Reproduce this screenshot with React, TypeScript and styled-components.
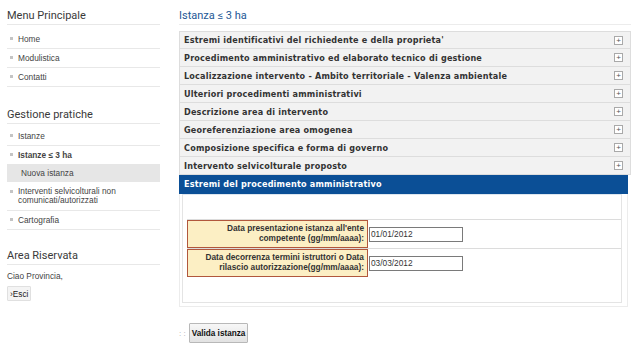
import styled, { createGlobalStyle } from 'styled-components';

const GlobalStyle = createGlobalStyle`
  html, body {
    margin: 0;
    padding: 0;
    background: #ffffff;
  }
  body {
    font-family: "Liberation Sans", Arial, sans-serif;
    color: #333333;
  }
`;

const Page = styled.div`
  display: flex;
  align-items: flex-start;
  gap: 19px;
  padding: 0 5px 0 7px;
`;

const Sidebar = styled.aside`
  width: 153px;
  flex-shrink: 0;
`;

const SideHeading = styled.h2<{ $top: number }>`
  margin: ${(p) => p.$top}px 0 0;
  padding: 9px 0 1px;
  font-family: Roboto, "Liberation Sans", sans-serif;
  font-weight: 400;
  font-size: 11px;
  line-height: 14px;
  color: #3a3a3a;
  border-bottom: 1px solid #e8e8e8;
`;

const MenuList = styled.ul<{ $top: number }>`
  list-style: none;
  margin: ${(p) => p.$top}px 0 0;
  padding: 0;
`;

const MenuItem = styled.li<{ $bold?: boolean; $noLine?: boolean }>`
  display: flex;
  align-items: center;
  gap: 5px;
  min-height: 18px;
  padding: 0 0 0 3px;
  font-size: 8.3px;
  line-height: 9px;
  color: #444;
  font-weight: ${(p) => (p.$bold ? 700 : 400)};
  border-bottom: ${(p) => (p.$noLine ? 'none' : '1px solid #e8e8e8')};

  &::before {
    content: '';
    width: 3px;
    height: 3px;
    background: #c4c4c4;
    flex-shrink: 0;
    align-self: flex-start;
    margin-top: 7px;
  }
`;

const MultiItem = styled(MenuItem)`
  padding-top: 4px;
  padding-bottom: 5px;
  align-items: flex-start;

  &::before {
    margin-top: 3px;
  }
`;

const SubItem = styled.li`
  display: flex;
  align-items: center;
  height: 18px;
  padding-left: 14px;
  margin-bottom: 1px;
  font-size: 8.3px;
  color: #444;
  background: #e6e6e6;
`;

const Greeting = styled.p`
  margin: 6px 0 0;
  font-size: 8.3px;
  line-height: 10px;
  color: #444;
`;

const LogoutButton = styled.button`
  margin-top: 5px;
  padding: 0 2px;
  height: 15px;
  font-family: "Liberation Sans", Arial, sans-serif;
  font-size: 8.3px;
  color: #222;
  background: #f4f4f4;
  border: 1px solid #e0e0e0;
  border-radius: 1px;
`;

const Main = styled.main`
  flex: none;
  width: 452px;
`;

const MainHeading = styled.h1`
  margin: 0;
  padding: 9px 0 1px;
  font-family: Roboto, "Liberation Sans", sans-serif;
  font-weight: 400;
  font-size: 11px;
  line-height: 14px;
  color: #1d5896;
  border-bottom: 1px solid #ececec;
`;

const Accordion = styled.div`
  margin-top: 6px;
  width: 452px;
`;

const Row = styled.div`
  display: flex;
  align-items: center;
  justify-content: space-between;
  height: 17px;
  padding: 0 7px 0 4px;
  background: #f2f2f2;
  border: 1px solid #dddddd;
  border-top: none;
  font-family: "DejaVu Sans", Verdana, sans-serif;
  font-weight: 700;
  font-size: 8.1px;
  letter-spacing: 0.2px;
  color: #333;

  &:first-child {
    border-top: 1px solid #dddddd;
    height: 16px;
  }
`;

const ActiveRow = styled(Row)`
  height: 18px;
  margin-right: 3px;
  background: #0b4f96;
  border-color: #0b4f96;
  color: #ffffff;
`;

const PlusBox = styled.span`
  display: flex;
  align-items: center;
  justify-content: center;
  width: 7px;
  height: 7px;
  border: 1px solid #a9a9a9;
  background: #ffffff;
  font-family: "Liberation Sans", Arial, sans-serif;
  font-size: 8px;
  font-weight: 400;
  letter-spacing: 0;
  line-height: 7px;
  color: #555;
`;

const Panel = styled.div`
  margin-right: 3px;
  padding: 0 5px 3px 2px;
  border: 1px solid #ececec;
  border-top: none;
`;

const FormTable = styled.div`
  border: 1px solid #e4e4e4;
  border-top-color: #dde6ef;
  padding: 0 0 0 4px;
`;

const Spacer = styled.div<{ $h: number }>`
  height: ${(p) => p.$h}px;
`;

const FieldRow = styled.div`
  display: flex;
  align-items: center;
  gap: 1px;
  border-top: 1px solid #dcdcdc;

  &:last-of-type {
    border-bottom: 1px solid #dcdcdc;
  }
`;

const Label = styled.label`
  box-sizing: border-box;
  width: 181px;
  height: 28px;
  padding: 2px 3px 0 4px;
  background: #fcefc4;
  border: 1px solid #b1573c;
  text-align: right;
  font-weight: 700;
  font-size: 8.3px;
  line-height: 10px;
  color: #333;
`;

const DateInput = styled.input`
  box-sizing: border-box;
  width: 94px;
  height: 15px;
  padding: 0 1px;
  border: 1px solid #7a7a7a;
  font-family: "Liberation Sans", Arial, sans-serif;
  font-size: 8.3px;
  color: #333;
  background: #fff;
  outline: none;
`;

const Actions = styled.div`
  display: flex;
  align-items: center;
  gap: 3px;
  margin-top: 16px;
`;

const Dots = styled.span`
  font-size: 8px;
  color: #aaa;
  white-space: pre;
`;

const SubmitButton = styled.button`
  height: 20px;
  padding: 0 2px;
  font-family: "Liberation Sans", Arial, sans-serif;
  font-weight: 700;
  font-size: 8.2px;
  color: #111;
  background: linear-gradient(#f7f7f7, #e2e2e2);
  border: 1px solid #b8b8b8;
  border-radius: 1px;
`;

const sections = [
  "Estremi identificativi del richiedente e della proprieta'",
  'Procedimento amministrativo ed elaborato tecnico di gestione',
  'Localizzazione intervento - Ambito territoriale - Valenza ambientale',
  'Ulteriori procedimenti amministrativi',
  'Descrizione area di intervento',
  'Georeferenziazione area omogenea',
  'Composizione specifica e forma di governo',
  'Intervento selvicolturale proposto',
];

export default function App() {
  return (
    <>
      <GlobalStyle />
      <Page>
        <Sidebar>
          <SideHeading $top={0}>Menu Principale</SideHeading>
          <MenuList $top={5}>
            <MenuItem>Home</MenuItem>
            <MenuItem>Modulistica</MenuItem>
            <MenuItem>Contatti</MenuItem>
          </MenuList>

          <SideHeading $top={12}>Gestione pratiche</SideHeading>
          <MenuList $top={3}>
            <MenuItem>Istanze</MenuItem>
            <MenuItem $bold $noLine>Istanze ≤ 3 ha</MenuItem>
            <SubItem>Nuova istanza</SubItem>
            <MultiItem>
              Interventi selvicolturali non
              <br />
              comunicati/autorizzati
            </MultiItem>
            <MenuItem>Cartografia</MenuItem>
          </MenuList>

          <SideHeading $top={10}>Area Riservata</SideHeading>
          <Greeting>Ciao Provincia,</Greeting>
          <LogoutButton>›Esci</LogoutButton>
        </Sidebar>

        <Main>
          <MainHeading>Istanza ≤ 3 ha</MainHeading>
          <Accordion>
            {sections.map((s) => (
              <Row key={s}>
                <span>{s}</span>
                <PlusBox>+</PlusBox>
              </Row>
            ))}
            <ActiveRow>
              <span>Estremi del procedimento amministrativo</span>
            </ActiveRow>
            <Panel>
              <FormTable>
                <Spacer $h={24} />
                <FieldRow>
                  <Label>
                    Data presentazione istanza all'ente
                    <br />
                    competente (gg/mm/aaaa):
                  </Label>
                  <DateInput defaultValue="01/01/2012" />
                </FieldRow>
                <FieldRow>
                  <Label>
                    Data decorrenza termini istruttori o Data
                    <br />
                    rilascio autorizzazione(gg/mm/aaaa):
                  </Label>
                  <DateInput defaultValue="03/03/2012" />
                </FieldRow>
                <Spacer $h={25} />
              </FormTable>
            </Panel>
          </Accordion>
          <Actions>
            <Dots>: :</Dots>
            <SubmitButton>Valida istanza</SubmitButton>
          </Actions>
        </Main>
      </Page>
    </>
  );
}
